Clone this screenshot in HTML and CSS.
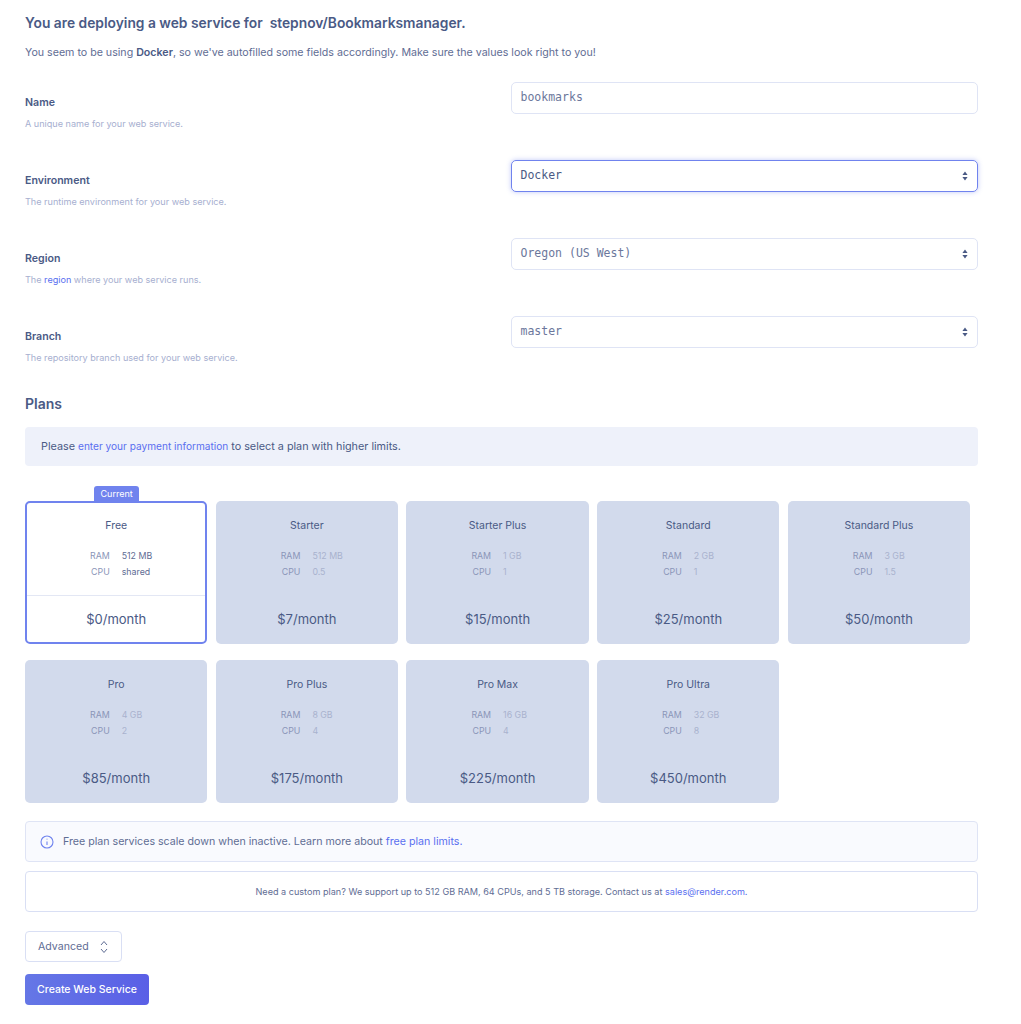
FILE: index.html
```html
<!DOCTYPE html>
<html lang="en">
<head>
    <meta charset="UTF-8">
    <meta name="viewport" content="width=device-width, initial-scale=1.0">
    <title>Create Web Service</title>
    <link rel="stylesheet" href="styles.css">
</head>
<body>
    <div class="page">
        <h1 class="title">You are deploying a web service for&nbsp; stepnov/Bookmarksmanager.</h1>
        <p class="intro">You seem to be using <strong>Docker</strong>, so we've autofilled some fields accordingly. Make sure the values look right to you!</p>

        <div class="field">
            <div class="field-info">
                <div class="field-name">Name</div>
                <div class="field-help">A unique name for your web service.</div>
            </div>
            <div class="control">bookmarks</div>
        </div>

        <div class="field">
            <div class="field-info">
                <div class="field-name">Environment</div>
                <div class="field-help">The runtime environment for your web service.</div>
            </div>
            <div class="control control-focus">
                Docker
                <svg class="updown" viewBox="0 0 6 10"><path d="M3 0.5 L5.6 4 H0.4 Z M3 9.5 L0.4 6 H5.6 Z"/></svg>
            </div>
        </div>

        <div class="field">
            <div class="field-info">
                <div class="field-name">Region</div>
                <div class="field-help">The <a href="#">region</a> where your web service runs.</div>
            </div>
            <div class="control">
                Oregon (US West)
                <svg class="updown" viewBox="0 0 6 10"><path d="M3 0.5 L5.6 4 H0.4 Z M3 9.5 L0.4 6 H5.6 Z"/></svg>
            </div>
        </div>

        <div class="field">
            <div class="field-info">
                <div class="field-name">Branch</div>
                <div class="field-help">The repository branch used for your web service.</div>
            </div>
            <div class="control">
                master
                <svg class="updown" viewBox="0 0 6 10"><path d="M3 0.5 L5.6 4 H0.4 Z M3 9.5 L0.4 6 H5.6 Z"/></svg>
            </div>
        </div>

        <h2 class="plans-title">Plans</h2>
        <div class="payment">Please <a href="#">enter your payment information</a> to select a plan with higher limits.</div>

        <div class="plans">
            <div class="plan plan-current">
                <span class="badge">Current</span>
                <div class="plan-name">Free</div>
                <div class="specs">
                    <span class="spec-label">RAM</span><span class="spec-value">512 MB</span>
                    <span class="spec-label">CPU</span><span class="spec-value">shared</span>
                </div>
                <div class="plan-price">$0/month</div>
            </div>
            <div class="plan">
                <div class="plan-name">Starter</div>
                <div class="specs">
                    <span class="spec-label">RAM</span><span class="spec-value">512 MB</span>
                    <span class="spec-label">CPU</span><span class="spec-value">0.5</span>
                </div>
                <div class="plan-price">$7/month</div>
            </div>
            <div class="plan">
                <div class="plan-name">Starter Plus</div>
                <div class="specs">
                    <span class="spec-label">RAM</span><span class="spec-value">1 GB</span>
                    <span class="spec-label">CPU</span><span class="spec-value">1</span>
                </div>
                <div class="plan-price">$15/month</div>
            </div>
            <div class="plan">
                <div class="plan-name">Standard</div>
                <div class="specs">
                    <span class="spec-label">RAM</span><span class="spec-value">2 GB</span>
                    <span class="spec-label">CPU</span><span class="spec-value">1</span>
                </div>
                <div class="plan-price">$25/month</div>
            </div>
            <div class="plan">
                <div class="plan-name">Standard Plus</div>
                <div class="specs">
                    <span class="spec-label">RAM</span><span class="spec-value">3 GB</span>
                    <span class="spec-label">CPU</span><span class="spec-value">1.5</span>
                </div>
                <div class="plan-price">$50/month</div>
            </div>
            <div class="plan">
                <div class="plan-name">Pro</div>
                <div class="specs">
                    <span class="spec-label">RAM</span><span class="spec-value">4 GB</span>
                    <span class="spec-label">CPU</span><span class="spec-value">2</span>
                </div>
                <div class="plan-price">$85/month</div>
            </div>
            <div class="plan">
                <div class="plan-name">Pro Plus</div>
                <div class="specs">
                    <span class="spec-label">RAM</span><span class="spec-value">8 GB</span>
                    <span class="spec-label">CPU</span><span class="spec-value">4</span>
                </div>
                <div class="plan-price">$175/month</div>
            </div>
            <div class="plan">
                <div class="plan-name">Pro Max</div>
                <div class="specs">
                    <span class="spec-label">RAM</span><span class="spec-value">16 GB</span>
                    <span class="spec-label">CPU</span><span class="spec-value">4</span>
                </div>
                <div class="plan-price">$225/month</div>
            </div>
            <div class="plan">
                <div class="plan-name">Pro Ultra</div>
                <div class="specs">
                    <span class="spec-label">RAM</span><span class="spec-value">32 GB</span>
                    <span class="spec-label">CPU</span><span class="spec-value">8</span>
                </div>
                <div class="plan-price">$450/month</div>
            </div>
        </div>

        <div class="notice">
            <svg class="info" viewBox="0 0 14 14"><circle cx="7" cy="7" r="6" fill="none"/><path d="M7 6.4 V10 M7 3.8 V4.6"/></svg>
            <span>Free plan services scale down when inactive. Learn more about <a href="#">free plan limits.</a></span>
        </div>
        <div class="custom">Need a custom plan? We support up to 512 GB RAM, 64 CPUs, and 5 TB storage. Contact us at <a href="#">sales@render.com.</a></div>

        <button class="advanced" type="button">
            Advanced
            <svg class="chevrons" viewBox="0 0 10 14"><path d="M2 5 L5 1.5 L8 5 M2 9 L5 12.5 L8 9"/></svg>
        </button>
        <button class="create" type="button">Create Web Service</button>
    </div>
</body>
</html>
```
FILE: styles.css
```css
body {
    font-family: Inter, "Liberation Sans", sans-serif;
    margin: 0;
    padding: 0;
    background-color: #fff;
    color: #4a5a85;
}

a {
    color: #5a6ff0;
    text-decoration: none;
}

.page {
    width: 953px;
    margin-left: 25px;
    padding-top: 14px;
}

.title {
    margin: 0;
    font-size: 13.8px;
    line-height: 18px;
    font-weight: 600;
    color: #4a5a85;
}

.intro {
    margin: 13px 0 0;
    font-size: 10.65px;
    line-height: 16px;
    color: #5f6d94;
}

.intro strong {
    font-weight: 600;
    color: #4a5a85;
}

.field {
    display: grid;
    grid-template-columns: 485.5px 467.5px;
    height: 78px;
}

.intro + .field {
    margin-top: 21px;
}

.field-info {
    padding-top: 14px;
}

.field-name {
    font-size: 10.6px;
    line-height: 14px;
    font-weight: 600;
    color: #4a5a85;
}

.field-help {
    margin-top: 8px;
    font-size: 9.1px;
    line-height: 12px;
    color: #a7afd0;
}

.control {
    position: relative;
    box-sizing: border-box;
    height: 32px;
    padding-left: 9px;
    border: 1px solid #dfe4f5;
    border-radius: 5px;
    font-family: "DejaVu Sans Mono", monospace;
    font-size: 11.5px;
    line-height: 28px;
    color: #6b779c;
}

.control-focus {
    border-color: #7083ee;
    color: #4a5a85;
    box-shadow: 0 0 5px rgba(112, 131, 238, 0.45);
}

.updown {
    position: absolute;
    right: 9px;
    top: 10px;
    width: 6px;
    height: 10px;
    fill: #4a5a85;
}

.plans-title {
    margin: 0;
    padding-top: 1px;
    font-size: 14px;
    line-height: 18px;
    font-weight: 600;
    color: #4a5a85;
}

.payment {
    box-sizing: border-box;
    height: 39px;
    margin-top: 14px;
    padding-left: 16px;
    border-radius: 4px;
    background-color: #eef1fa;
    font-size: 10.8px;
    line-height: 38px;
    color: #4a5a85;
}

.payment a {
    font-size: 10.1px;
}

.plans {
    display: grid;
    grid-template-columns: repeat(5, 182.4px);
    grid-auto-rows: 143px;
    gap: 15.5px 8.3px;
    margin-top: 35px;
}

.plan {
    position: relative;
    display: flex;
    flex-direction: column;
    align-items: center;
    border-radius: 5px;
    background-color: #d2daec;
    color: #4a5a85;
}

.plan-current {
    box-sizing: border-box;
    border: 2px solid #7083ee;
    background-color: #fff;
}

.plan-name {
    margin-top: 18px;
    font-size: 10.5px;
    line-height: 14px;
}

.plan-current .plan-name {
    margin-top: 16px;
}

.specs {
    display: grid;
    grid-template-columns: 1fr 1fr;
    column-gap: 12px;
    row-gap: 3px;
    box-sizing: border-box;
    width: 100%;
    padding-right: 1px;
    margin-top: 16px;
    font-size: 8.8px;
    line-height: 13px;
}

.spec-label {
    text-align: right;
    color: #8a95b8;
}

.spec-value {
    color: #a9b2ce;
}

.plan-current .spec-value {
    color: #5f6d94;
}

.plan-price {
    position: absolute;
    left: 0;
    right: 0;
    bottom: 16px;
    font-size: 13px;
    line-height: 18px;
    text-align: center;
    color: #4a5a85;
}

.plan-current .plan-price {
    bottom: 0;
    padding: 14px 0 14px;
    border-top: 1px solid #e3e7f4;
}

.badge {
    position: absolute;
    top: -17px;
    left: 67px;
    height: 16px;
    padding: 0 6.5px;
    border-radius: 3px 3px 0 0;
    background-color: #7083ee;
    font-size: 9px;
    line-height: 15px;
    color: #fff;
}

.notice {
    box-sizing: border-box;
    display: flex;
    align-items: center;
    gap: 9px;
    height: 41px;
    margin-top: 18.5px;
    padding-left: 14px;
    border: 1px solid #dfe4f5;
    border-radius: 4px;
    background-color: #f9fafe;
    font-size: 10.65px;
    color: #5f6d94;
}

.info {
    width: 14px;
    height: 14px;
    stroke: #6f83ee;
    stroke-width: 1.1;
}

.custom {
    box-sizing: border-box;
    height: 41px;
    margin-top: 9px;
    border: 1px solid #d9dff4;
    border-radius: 4px;
    font-size: 9.1px;
    line-height: 40px;
    text-align: center;
    color: #5f6d94;
}

.advanced {
    display: flex;
    align-items: center;
    gap: 10px;
    box-sizing: border-box;
    width: 97px;
    height: 31px;
    margin-top: 19px;
    padding: 0 0 0 12px;
    border: 1px solid #d9dff4;
    border-radius: 4px;
    background-color: #fff;
    font-family: inherit;
    font-size: 10.6px;
    color: #5f6d94;
}

.chevrons {
    width: 10px;
    height: 14px;
    fill: none;
    stroke: #5f6d94;
    stroke-width: 1;
}

.create {
    display: block;
    box-sizing: border-box;
    width: 124px;
    height: 31px;
    margin-top: 12px;
    border: none;
    border-radius: 4px;
    background: linear-gradient(to right, #6577e6, #5a5fe6);
    font-family: inherit;
    font-size: 10.5px;
    font-weight: 500;
    color: #fff;
}
```
